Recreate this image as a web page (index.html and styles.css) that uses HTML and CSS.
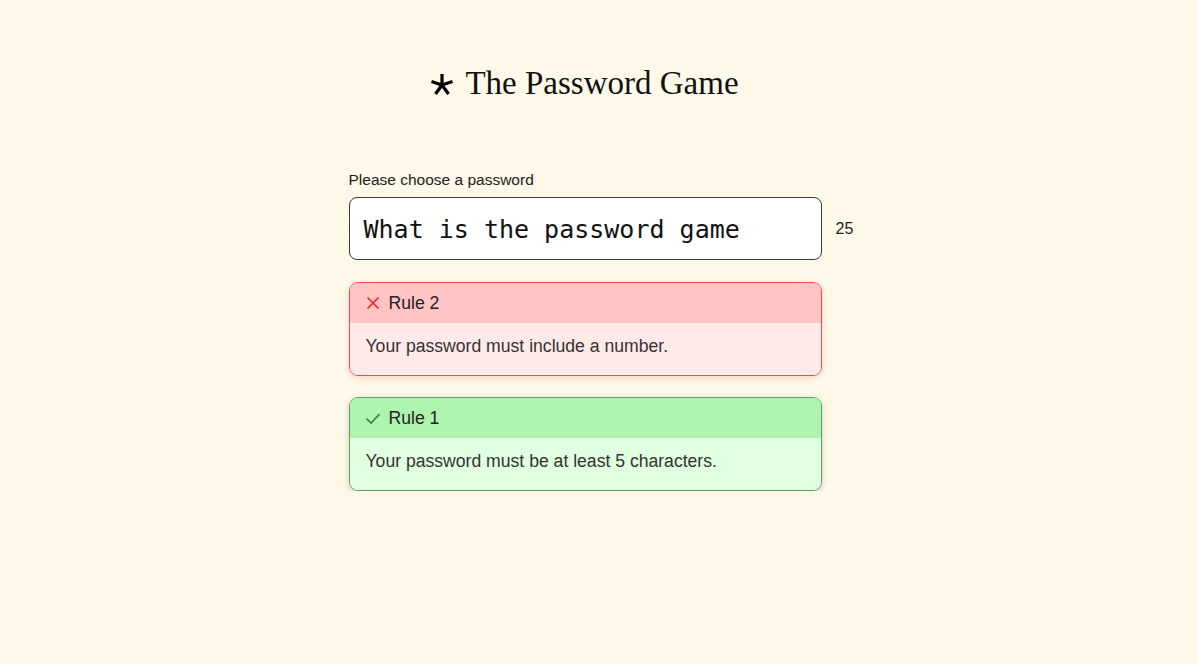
FILE: index.html
```html
<!DOCTYPE html>
<html lang="en">
<head>
  <meta charset="UTF-8" />
  <meta name="viewport" content="width=device-width, initial-scale=1.0"/>
  <title>The Password Game</title>
  <link rel="stylesheet" href="styles.css">
</head>
<body>

<div class="title">
  <svg class="star" width="22" height="22" viewBox="-11 -11 22 22">
    <g stroke="#000" stroke-width="3.2" stroke-linecap="butt">
      <line x1="0" y1="0" x2="0" y2="-11" />
      <line x1="0" y1="0" x2="10.5" y2="-3.4" />
      <line x1="0" y1="0" x2="6.5" y2="9" />
      <line x1="0" y1="0" x2="-6.5" y2="9" />
      <line x1="0" y1="0" x2="-10.5" y2="-3.4" />
    </g>
  </svg>
  <span>The Password Game</span>
</div>

<div class="game">
  <div class="label">Please choose a password</div>
  <div class="pw-row">
    <div class="pw-box">What is the password game</div>
    <div class="pw-count">25</div>
  </div>

  <div class="rule bad">
    <div class="rule-top">
      <svg width="14" height="14" viewBox="0 0 14 14">
        <path d="M1.5 1.5 L12.5 12.5 M12.5 1.5 L1.5 12.5" stroke="#f0212b" stroke-width="1.6" />
      </svg>
      Rule 2
    </div>
    <div class="rule-desc">Your password must include a number.</div>
  </div>

  <div class="rule good">
    <div class="rule-top">
      <svg width="14" height="14" viewBox="0 0 14 14">
        <path d="M0.5 7.5 L5 12 L13.5 3" stroke="#2f8a3c" stroke-width="1.6" fill="none" />
      </svg>
      Rule 1
    </div>
    <div class="rule-desc">Your password must be at least 5 characters.</div>
  </div>
</div>

</body>
</html>
```

FILE: styles.css
```css
body {
  font-family: 'Liberation Sans', Arial, sans-serif;
  background: #fef8e8;
  color: #222;
  margin: 0;
  padding: 0;
}
.title {
  display: flex;
  justify-content: center;
  align-items: center;
  gap: 12px;
  padding-top: 62px;
  padding-right: 28px;
  height: 42px;
  font-family: 'Liberation Serif', serif;
  font-size: 33px;
  color: #111;
}
.star {
  margin-top: 4px;
}
.game {
  width: 473px;
  margin: 0 auto;
  padding-top: 67px;
  position: relative;
  left: -14px;
}
.label {
  font-size: 15.5px;
  color: #222;
  margin-bottom: 8px;
}
.pw-row {
  display: flex;
  align-items: center;
  width: 540px;
}
.pw-box {
  box-sizing: border-box;
  width: 473px;
  height: 63px;
  border: 1px solid #3a3a3a;
  border-radius: 8px;
  background: #fff;
  padding: 16px 14px 14px;
  font-family: 'DejaVu Sans Mono', monospace;
  font-size: 25px;
  line-height: 32px;
  color: #111;
}
.pw-count {
  margin-left: 14px;
  font-size: 16px;
}
.rule {
  margin-top: 22px;
  border: 1px solid;
  border-radius: 9px;
  overflow: hidden;
  box-shadow: 0 2px 6px rgba(0, 0, 0, 0.18);
}
.good {
  margin-top: 21px;
}
.rule-top {
  height: 40px;
  display: flex;
  align-items: center;
  gap: 9px;
  padding-left: 16px;
  font-size: 17.6px;
}
.rule-desc {
  box-sizing: border-box;
  height: 52px;
  display: flex;
  align-items: center;
  padding: 0 16px 6px;
  font-size: 17.6px;
  color: #333;
}
.bad {
  border-color: #f24a4a;
  box-shadow: 0 2px 6px rgba(200, 60, 60, 0.2);
}
.bad .rule-top {
  background: #ffc4c4;
}
.bad .rule-desc {
  background: #ffeaea;
}
.good {
  border-color: #5e9e62;
}
.good .rule-top {
  background: #aef3ae;
}
.good .rule-desc {
  background: #e1ffe1;
}
```
